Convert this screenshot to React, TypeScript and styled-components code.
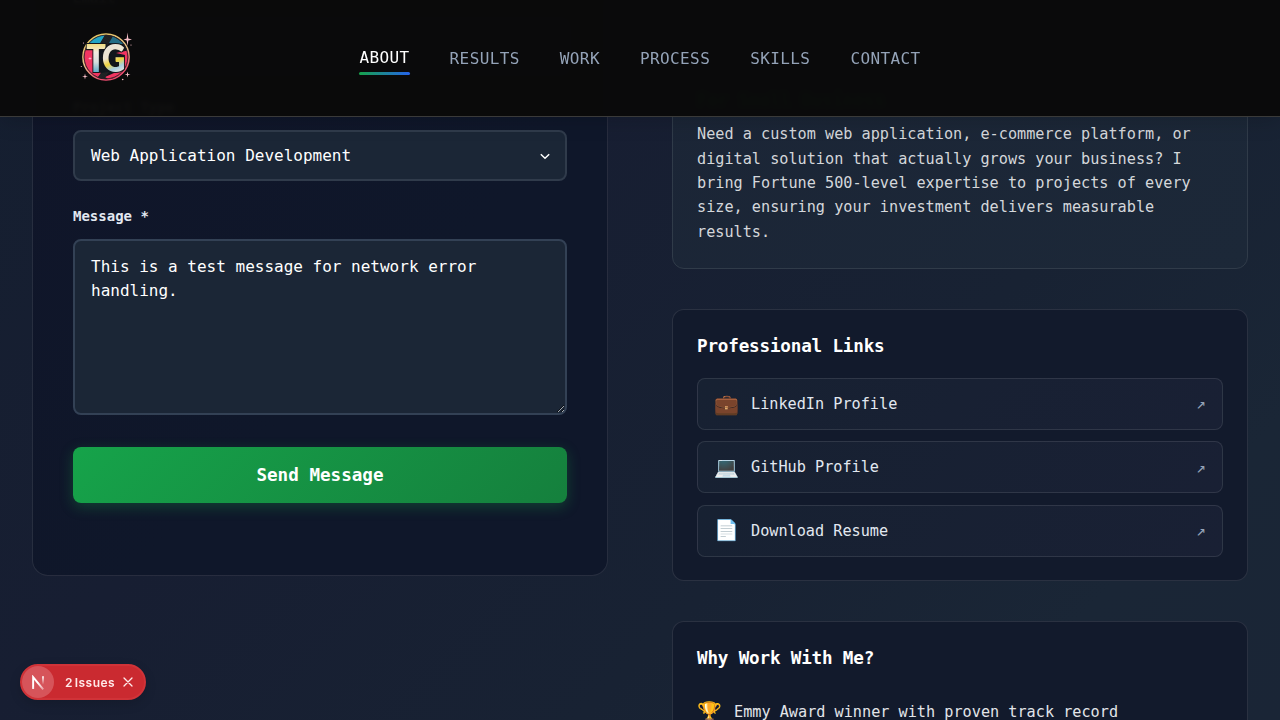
import React from "react";
import styled, { createGlobalStyle, css } from "styled-components";

const GlobalStyle = createGlobalStyle`
  * { box-sizing: border-box; margin: 0; }
  html, body { height: 720px; overflow: hidden; }
  body {
    font-family: "DejaVu Sans Mono", monospace;
    font-size: 16px;
    line-height: 1.6;
    color: #fff;
    background: #171e30;
  }
`;

const Page = styled.div`
  height: 720px;
  overflow: hidden;
  background: linear-gradient(135deg, #151f30 0%, #171e32 35%, #182233 65%, #1a2636 85%, #1a2536 100%);
`;

const Header = styled.header`
  position: fixed;
  inset: 0 0 auto 0;
  z-index: 10;
  height: 117px;
  display: grid;
  grid-template-columns: 1fr auto 1fr;
  align-items: center;
  padding: 0 80px;
  background: rgba(10, 10, 10, 0.98);
  border-bottom: 1px solid #3a3a39;
  box-shadow: 0 4px 20px rgba(0, 0, 0, 0.15);
  backdrop-filter: blur(2px);
`;

const Nav = styled.nav`
  display: flex;
  gap: 40px;
`;

const NavLink = styled.a<{ $active?: boolean }>`
  position: relative;
  height: 32px;
  line-height: 34px;
  letter-spacing: 0.4px;
  color: #94a3b8;
  ${(p) =>
    p.$active &&
    css`
      color: #fff;
      transform: translateY(-1px);
      &::after {
        content: "";
        position: absolute;
        left: 0;
        right: 0;
        bottom: -2px;
        height: 3px;
        border-radius: 2px;
        background: linear-gradient(90deg, #16a34a, #2563eb);
      }
    `}
`;

const Columns = styled.main`
  display: grid;
  grid-template-columns: 1fr 1fr;
  gap: 64px;
  align-items: start;
  padding: 0 32px;
`;

const FormCard = styled.form`
  height: 616px;
  margin-top: -40px;
  padding: 26px 40px 0;
  border: 1px solid rgba(255, 255, 255, 0.1);
  border-radius: 16px;
  background: linear-gradient(135deg, #101529 0%, #0f172a 60%, #0f172a 100%);
`;

const Field = styled.div`
  height: 109px;
  &:last-of-type { height: 242px; }
`;

const Label = styled.label`
  display: block;
  height: 34px;
  font-size: 14px;
  line-height: 22px;
  font-weight: 700;
  color: #e2e8f0;
`;

const controlBox = css`
  display: block;
  width: 100%;
  padding: 14px 16px;
  border: 2px solid #303b4b;
  border-radius: 8px;
  background: #1b2636;
  color: #fff;
  font-family: inherit;
  font-size: 16px;
  outline: none;
`;

const Input = styled.input`
  ${controlBox}
  height: 51px;
`;

const SelectBox = styled.div`
  ${controlBox}
  height: 51px;
  display: flex;
  justify-content: space-between;
  align-items: center;
  line-height: 19px;
  padding-right: 12px;
`;

const TextArea = styled.textarea`
  ${controlBox}
  height: 176px;
  line-height: 24px;
  border-color: #334155;
  resize: vertical;
`;

const SubmitButton = styled.button`
  width: 100%;
  height: 56px;
  border: 0;
  border-radius: 8px;
  color: #fff;
  font: 700 17.6px "DejaVu Sans Mono", monospace;
  background: linear-gradient(135deg, #16a34a, #15803d);
  box-shadow: 0 4px 14px rgba(22, 163, 74, 0.3);
`;

const SideColumn = styled.div`
  display: flex;
  flex-direction: column;
  gap: 40px;
  margin-top: 28px;
`;

const InfoCard = styled.section<{ $highlight?: boolean; $height: number }>`
  display: flex;
  flex-direction: column;
  flex: none;
  height: ${(p) => p.$height}px;
  padding: ${(p) => (p.$highlight ? "57px" : "22px")} 24px 0;
  border: 1px solid ${(p) => (p.$highlight ? "#303b49" : "rgba(255, 255, 255, 0.1)")};
  border-radius: 12px;
  background: ${(p) => (p.$highlight ? "linear-gradient(135deg, #1b2536, #1c2838)" : "#121a2c")};
`;

const CardTitle = styled.h3<{ $accent?: boolean }>`
  height: 46px;
  font-size: 17.6px;
  line-height: 28px;
  letter-spacing: -0.176px;
  color: ${(p) => (p.$accent ? "#16a34a" : "#fff")};
`;

const Paragraph = styled.p`
  margin-top: -9.6px;
  font-size: 15.2px;
  line-height: 24.32px;
  color: #d4d7db;
`;

const LinkList = styled.div`
  display: flex;
  flex-direction: column;
  gap: 11.4px;
  padding-top: 0.16px;
`;

const LinkRow = styled.a`
  display: flex;
  align-items: center;
  gap: 12px;
  height: 51.9px;
  padding: 0 16px;
  border: 1px solid rgba(255, 255, 255, 0.1);
  border-radius: 8px;
  background: linear-gradient(135deg, #172132, #192034);
  font-size: 15.2px;
  color: #e2e8f0;
`;

const Emoji = styled.span`
  width: 25px;
  font-size: 20px;
  line-height: 28px;
  white-space: nowrap;
`;

const LinkEmoji = styled(Emoji)`
  margin-top: -1px;
`;

const Arrow = styled.span`
  margin-left: auto;
  font-size: 16px;
  color: #94a3b8;
`;

const Reason = styled.div`
  display: flex;
  align-items: center;
  gap: 12px;
  height: 44px;
  font-size: 15.2px;
  color: #e2e5e9;
`;

const IssuesBadge = styled.div`
  position: fixed;
  left: 20px;
  bottom: 20px;
  z-index: 20;
  display: flex;
  align-items: center;
  width: 126px;
  height: 36px;
  border: 2px solid #d03338;
  border-radius: 18px;
  background: #ca2a30;
  box-shadow: 0 4px 12px rgba(0, 0, 0, 0.14);
  font: 600 12px Inter, sans-serif;
  color: #ffe9e9;
`;

const BadgeMark = styled.span`
  display: flex;
  align-items: center;
  justify-content: center;
  width: 32px;
  height: 32px;
  margin-right: 11px;
  border-radius: 50%;
  background: #d6545a;
`;

const BadgeText = styled.span`
  width: 56px;
  word-spacing: -1.6px;
  letter-spacing: 0.45px;
  white-space: nowrap;
`;

const LogoSvg = styled.svg`
  margin-top: -2px;
`;

const Logo = () => (
  <LogoSvg width="52" height="52" viewBox="0 0 52 52">
    <defs>
      <linearGradient id="ring" x1="0" y1="0" x2="0.4" y2="1">
        <stop offset="0" stopColor="#e5c65c" />
        <stop offset="0.6" stopColor="#e8c08a" />
        <stop offset="1" stopColor="#f04c70" />
      </linearGradient>
      <linearGradient id="letterT" x1="0" y1="-28" x2="0" y2="0" gradientUnits="userSpaceOnUse">
        <stop offset="0" stopColor="#f1dc7c" />
        <stop offset="0.3" stopColor="#f4ece0" />
        <stop offset="0.65" stopColor="#d9dedd" />
        <stop offset="1" stopColor="#62adc9" />
      </linearGradient>
      <linearGradient id="letterG" x1="24" y1="-28" x2="36" y2="2" gradientUnits="userSpaceOnUse">
        <stop offset="0" stopColor="#e9e5db" />
        <stop offset="0.42" stopColor="#eee4cf" />
        <stop offset="0.62" stopColor="#f0d53c" />
        <stop offset="0.82" stopColor="#a7cfe0" />
        <stop offset="1" stopColor="#e9e4df" />
      </linearGradient>
      <pattern id="dots" width="2" height="2" patternUnits="userSpaceOnUse" patternTransform="rotate(35)">
        <rect width="2" height="2" fill="#11151a" />
        <circle cx="1" cy="1" r=".4" fill="#8d826c" />
      </pattern>
      <clipPath id="disc"><circle cx="26" cy="26" r="22.3" /></clipPath>
    </defs>
    <g clipPath="url(#disc)">
      <rect width="52" height="52" fill="#12161c" />
      <path d="M8 13 L10 4 L28 0 L20 13Z" fill="#21a5c5" />
      <path d="M26 2 L35 4 L27 15 L19 14Z" fill="url(#dots)" />
      <path d="M33 5 L45 13 L37 13 L29 12Z" fill="#236d86" />
      <path d="M2 18 L7 17 L13 19 L14 40 L21 42 L17 50 L9 44 L2 30Z" fill="#f13561" />
      <path d="M36 22 L50 19 L49 34 L41 45 L31 50 L25 46 L43 38 L45 24Z" fill="#f13561" />
      <path d="M21 42 L29 41 L23 49 L17 47Z" fill="url(#dots)" />
    </g>
    <circle cx="26" cy="26" r="23.1" fill="none" stroke="url(#ring)" strokeWidth="1.5" />
    <circle cx="26" cy="26" r="21.8" fill="none" stroke="#291e25" strokeWidth=".8" />
    <g transform="translate(6.3 40.8) scale(0.84 1)" fontFamily="Lato, sans-serif" fontWeight="800" strokeWidth="2.2" paintOrder="stroke">
      <text fontSize="38.5" stroke="#15171a">
        <tspan fill="url(#letterT)">T</tspan>
        <tspan dx="-4.8" fill="url(#letterG)">G</tspan>
      </text>
    </g>
    <g fill="#f8bfc8">
      <path d="M47.5 1.5 L48.3 7.6 L52 8.5 L48.3 9.4 L47.5 15 L46.7 9.4 L43.5 8.5 L46.7 7.6Z" />
      <path d="M5 42.5 L5.6 44.9 L8 45.5 L5.6 46.1 L5 48.5 L4.4 46.1 L2 45.5 L4.4 44.9Z" />
      <path d="M47.5 40.5 L48.1 42.9 L50.5 43.5 L48.1 44.1 L47.5 46.5 L46.9 44.1 L44.5 43.5 L46.9 42.9Z" />
      <path d="M10 25.5 L10.4 27.1 L12 27.5 L10.4 27.9 L10 29.5 L9.6 27.9 L8 27.5 L9.6 27.1Z" />
      <circle cx="3.5" cy="12" r=".6" />
      <circle cx="51" cy="14" r=".6" />
      <circle cx="1.3" cy="35.5" r=".6" />
      <circle cx="42.7" cy="48.5" r=".8" />
    </g>
  </LogoSvg>
);

const navItems = ["ABOUT", "RESULTS", "WORK", "PROCESS", "SKILLS", "CONTACT"];
const links = [
  { icon: "💼", label: "LinkedIn Profile" },
  { icon: "💻", label: "GitHub Profile" },
  { icon: "📄", label: "Download Resume" },
];

export default function App() {
  return (
    <Page>
      <GlobalStyle />
      <Header>
        <Logo />
        <Nav>
          {navItems.map((item, i) => (
            <NavLink key={item} $active={i === 0}>{item}</NavLink>
          ))}
        </Nav>
      </Header>
      <Columns>
        <FormCard>
          <Field>
            <Label>Email *</Label>
            <Input />
          </Field>
          <Field>
            <Label>Project Type</Label>
            <SelectBox>
              Web Application Development
              <svg width="16" height="16" viewBox="0 0 16 16" fill="none" stroke="#fff" strokeWidth="1.5">
                <path d="M3.8 6.2l4.2 4 4.2-4" />
              </svg>
            </SelectBox>
          </Field>
          <Field>
            <Label>Message *</Label>
            <TextArea defaultValue="This is a test message for network error handling." spellCheck={false} />
          </Field>
          <SubmitButton type="button">Send Message</SubmitButton>
        </FormCard>
        <SideColumn>
          <InfoCard $highlight $height={241}>
            <CardTitle $accent>For Small Business</CardTitle>
            <Paragraph>
              Need a custom web application, e-commerce platform, or digital solution that actually grows
              your business? I bring Fortune 500-level expertise to projects of every size, ensuring your
              investment delivers measurable results.
            </Paragraph>
          </InfoCard>
          <InfoCard $height={272}>
            <CardTitle>Professional Links</CardTitle>
            <LinkList>
              {links.map((l) => (
                <LinkRow key={l.label}>
                  <LinkEmoji>{l.icon}</LinkEmoji>
                  <span>{l.label}</span>
                  <Arrow>↗</Arrow>
                </LinkRow>
              ))}
            </LinkList>
          </InfoCard>
          <InfoCard $height={300}>
            <CardTitle>Why Work With Me?</CardTitle>
            <Reason>
              <Emoji>🏆</Emoji>
              <span>Emmy Award winner with proven track record</span>
            </Reason>
          </InfoCard>
        </SideColumn>
      </Columns>
      <IssuesBadge>
        <BadgeMark>
          <svg width="15" height="15" viewBox="0 0 14 14" fill="none">
            <defs>
              <linearGradient id="diag" x1="7" y1="7" x2="12" y2="14" gradientUnits="userSpaceOnUse">
                <stop stopColor="#fff" /><stop offset="1" stopColor="#fff" stopOpacity=".35" />
              </linearGradient>
              <linearGradient id="stem" x1="0" y1="1" x2="0" y2="9" gradientUnits="userSpaceOnUse">
                <stop stopColor="#fff" /><stop offset="1" stopColor="#fff" stopOpacity="0" />
              </linearGradient>
            </defs>
            <path d="M2 13V2L11.4 13.4" stroke="url(#diag)" strokeWidth="1.8" />
            <path d="M11.2 1.2v8" stroke="url(#stem)" strokeWidth="1.7" />
          </svg>
        </BadgeMark>
        <BadgeText>2 Issues</BadgeText>
        <svg width="14" height="14" viewBox="0 0 14 14" stroke="#ffecec" strokeWidth="1.3" strokeLinecap="round">
          <path d="M3 3l8 8M11 3l-8 8" />
        </svg>
      </IssuesBadge>
    </Page>
  );
}
